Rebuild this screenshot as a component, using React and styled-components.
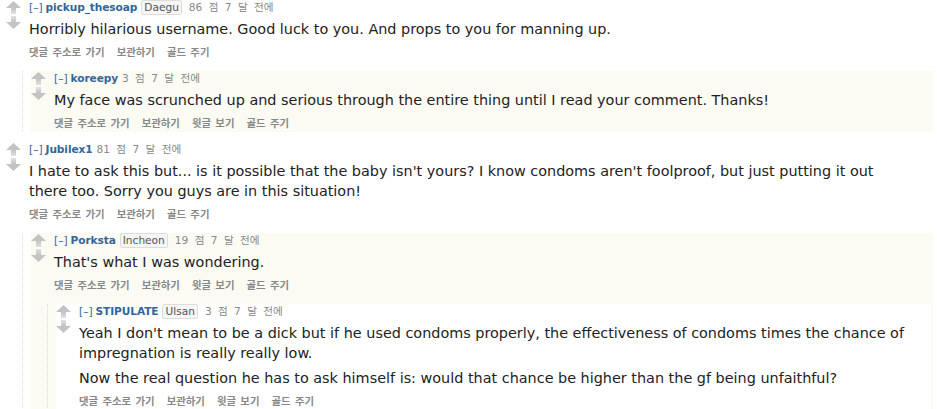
import React from 'react'
import styled, { createGlobalStyle } from 'styled-components'

const Global = createGlobalStyle`
body {
  margin: 0;
  background: #fff;
  font-family: "DejaVu Sans", Verdana, sans-serif;
}
`

const Page = styled.div`
  width: 937px;
  height: 409px;
  overflow: hidden;
`

const CommentBox = styled.div`
  margin: 10px 2px 0 ${p => (p.$depth === 0 ? '6px' : '8px')};
  background: ${p => (p.$depth % 2 === 1 ? '#fbfbf4' : '#fff')};
  ${p => p.$first && 'margin-top: 0;'}
`

const Entry = styled.div`
  display: flex;
  padding-bottom: 2px;
`

const Midcol = styled.div`
  width: 15px;
  flex: none;
  margin-right: 8px;
  padding-top: 1px;
  display: flex;
  flex-direction: column;
  gap: 2px;
`

const Content = styled.div`
  flex: 1;
  min-width: 0;
`

const Tagline = styled.p`
  margin: 0;
  height: 14px;
  font-size: 10.6px;
  line-height: 14px;
  color: #888;
  display: flex;
  align-items: center;
  white-space: nowrap;
  font-family: "DejaVu Sans", "Noto Sans CJK KR", sans-serif;
`

const Expand = styled.span`
  color: #369;
  margin-right: 3px;
`

const Author = styled.span`
  color: #369;
  font-weight: bold;
  margin-right: 4px;
  letter-spacing: -0.1px;
`

const Flair = styled.span`
  display: inline-block;
  background: #f5f5f5;
  border: 1px solid #ddd;
  border-radius: 2px;
  color: #545454;
  padding: 0 2px;
  height: 13px;
  line-height: 13px;
  margin-right: 7px;
`

const Score = styled.span`
  color: #888;
  word-spacing: 3px;
`

const Body = styled.div`
  margin-top: 5px;
  max-width: 60em;
  font-size: 14.4px;
  line-height: 20px;
  color: #222;

  & p {
    margin: 0;
  }
  & p + p {
    margin-top: 5px;
  }
`

const Buttons = styled.ul`
  list-style: none;
  margin: 6px 0 0;
  padding: 0;
  display: flex;
  height: 14px;
  line-height: 14px;

  & li {
    padding: 0 4px;
    font-size: 10.4px;
    font-weight: bold;
    word-spacing: 2px;
    color: #888;
    font-family: "Noto Sans CJK KR", sans-serif;
    white-space: nowrap;
  }
  & li:first-child {
    padding-left: 0;
  }
  & li + li {
    margin-left: 4px;
  }
`

const Child = styled.div`
  margin-left: 16px;
  border-left: 1px dotted #dde;
`

function Arrow({ down }) {
  const id = down ? 'gd' : 'gu'
  return (
    <svg width="15" height="13" viewBox="0 0 15 13" style={{ transform: down ? 'scaleY(-1)' : 'none' }}>
      <defs>
        <linearGradient id={id} x1="0" y1="0" x2="0" y2="1">
          <stop offset="0" stopColor="#c3c3c3" />
          <stop offset="1" stopColor="#e2e2e2" />
        </linearGradient>
      </defs>
      <polygon points="7.5,0 15,7 0,7" fill="#c3c3c3" />
      <rect x="5" y="7" width="5" height="6" fill={`url(#${id})`} />
    </svg>
  )
}

const CORE = ['댓글 주소로 가기', '보관하기']

function Comment({ depth = 0, first, author, flair, score, body, parent, children }) {
  const buttons = parent ? [...CORE, '윗글 보기', '골드 주기'] : [...CORE, '골드 주기']
  return (
    <CommentBox $depth={depth} $first={first}>
      <Entry>
        <Midcol>
          <Arrow />
          <Arrow down />
        </Midcol>
        <Content>
          <Tagline>
            <Expand>[–]</Expand>
            <Author>{author}</Author>
            {flair && <Flair>{flair}</Flair>}
            <Score>{score} 점 7 달 전에</Score>
          </Tagline>
          <Body>
            {body.map((t, i) => <p key={i}>{t}</p>)}
          </Body>
          <Buttons>
            {buttons.map(b => <li key={b}>{b}</li>)}
          </Buttons>
        </Content>
      </Entry>
      {children && <Child>{children}</Child>}
    </CommentBox>
  )
}

export default function App() {
  return (
    <Page>
      <Global />
      <Comment first author="pickup_thesoap" flair="Daegu" score="86"
        body={['Horribly hilarious username. Good luck to you. And props to you for manning up.']}>
        <Comment depth={1} parent author="koreepy" score="3"
          body={['My face was scrunched up and serious through the entire thing until I read your comment. Thanks!']} />
      </Comment>
      <Comment author="Jubilex1" score="81"
        body={["I hate to ask this but... is it possible that the baby isn't yours? I know condoms aren't foolproof, but just putting it out there too. Sorry you guys are in this situation!"]}>
        <Comment depth={1} parent author="Porksta" flair="Incheon" score="19"
          body={["That's what I was wondering."]}>
          <Comment depth={2} parent author="STIPULATE" flair="Ulsan" score="3"
            body={[
              "Yeah I don't mean to be a dick but if he used condoms properly, the effectiveness of condoms times the chance of impregnation is really really low.",
              'Now the real question he has to ask himself is: would that chance be higher than the gf being unfaithful?',
            ]} />
        </Comment>
      </Comment>
    </Page>
  )
}
